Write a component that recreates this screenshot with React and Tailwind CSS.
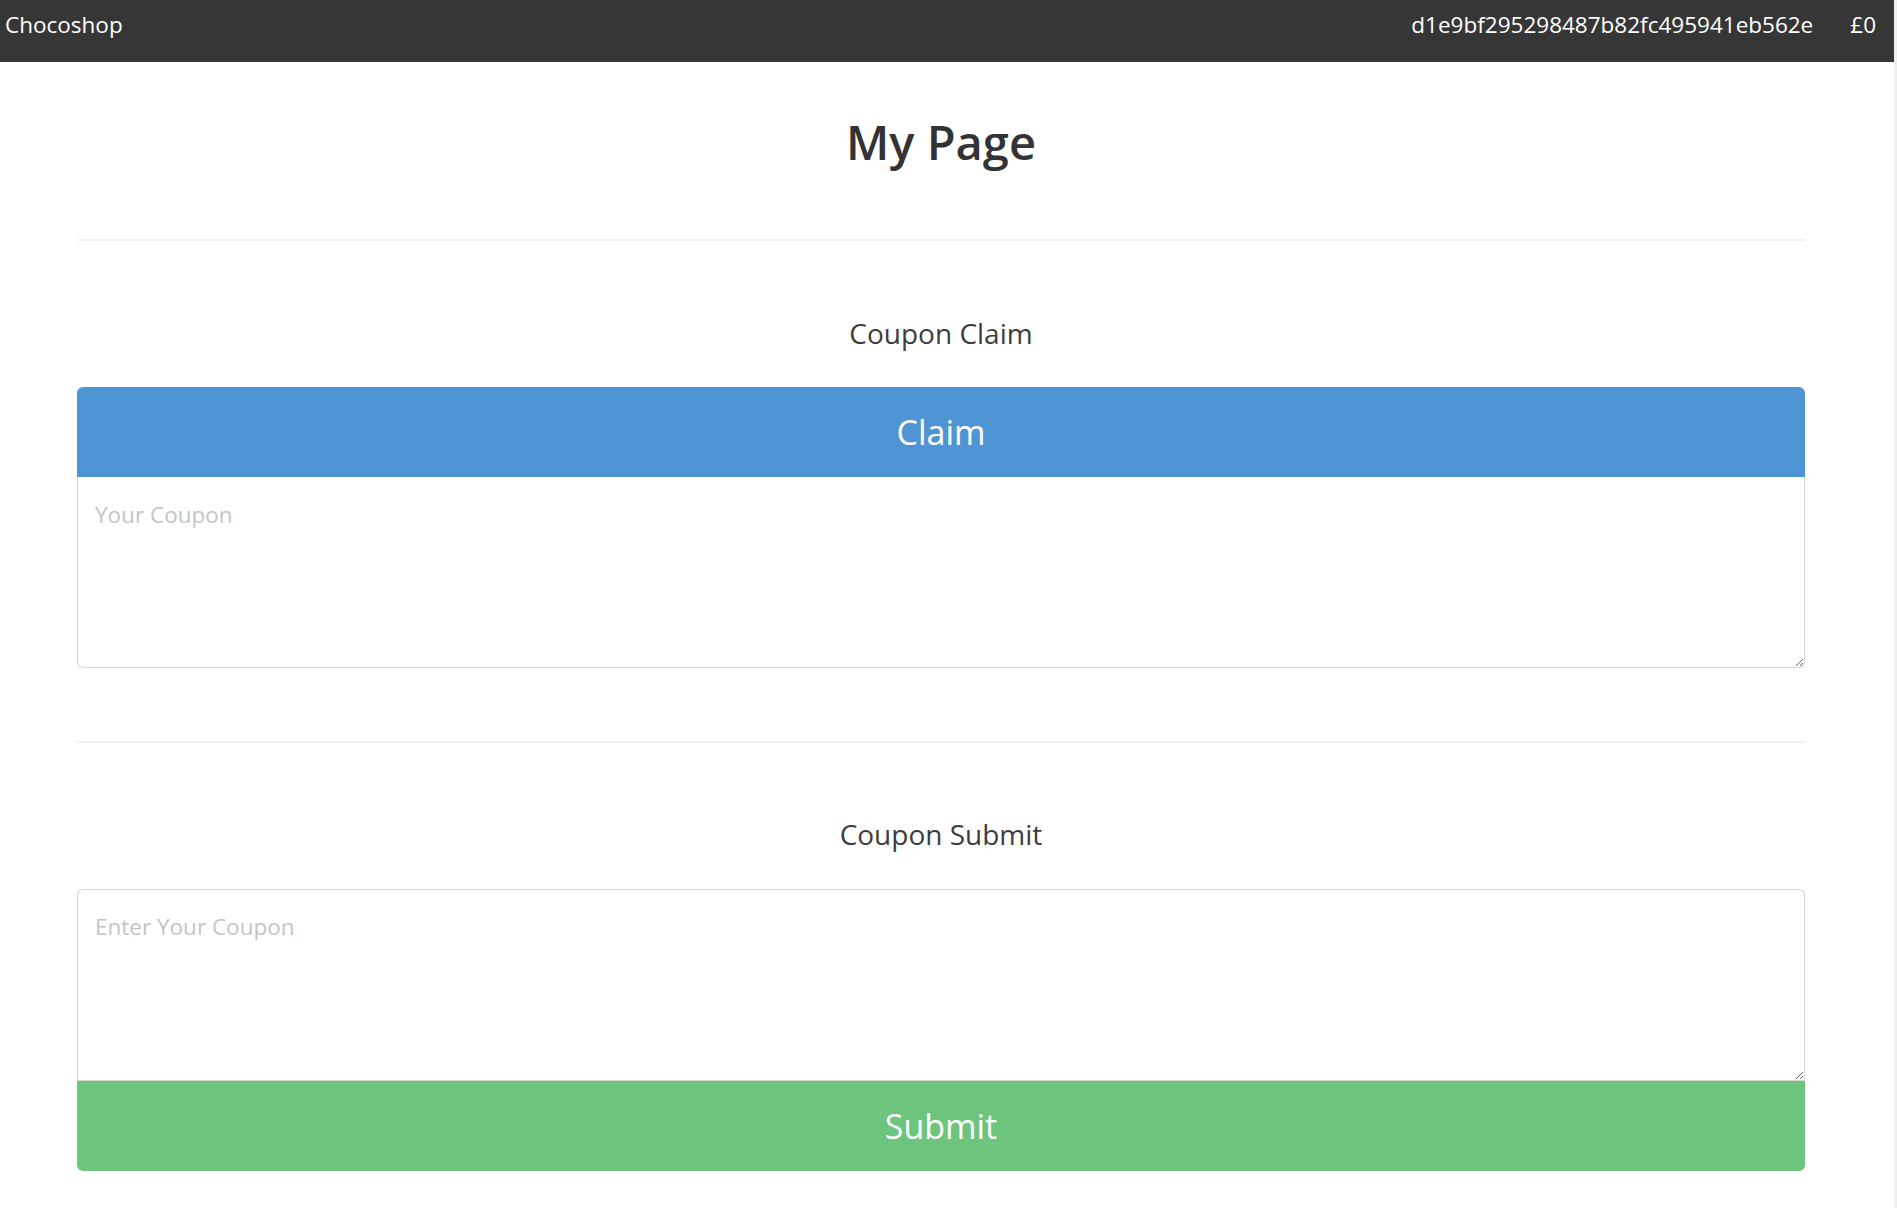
import { useState } from "react";

function Navbar() {
  return (
    <nav className="h-[62px] bg-[#363636] text-white flex items-center justify-between pl-[5px] pr-[18px] pb-[13px] text-[22.5px]">
      <span>Chocoshop</span>
      <div className="flex items-center gap-[37px]">
        <span>d1e9bf295298487b82fc495941eb562e</span>
        <span>£0</span>
      </div>
    </nav>
  );
}

function App() {
  const [claim, setClaim] = useState("");
  const [coupon, setCoupon] = useState("");

  return (
    <div
      className="flex min-h-[1208px] bg-white"
      style={{ fontFamily: '"Open Sans", "Noto Sans", sans-serif' }}
    >
      <div className="flex-1">
        <Navbar />

        <div className="ml-[77px] w-[1728px]">
          {/* Title */}
          <h1 className="mt-[50px] text-center text-[47px] leading-[60px] font-semibold text-[#333]">
            My Page
          </h1>
          <div className="mt-[67px] h-[2px] bg-[#f0f0f0]" />

          {/* Coupon claim */}
          <h3 className="mt-[72px] text-center text-[28px] leading-[40px] text-[#3d3d3d]">
            Coupon Claim
          </h3>
          <div className="mt-[34px] flex flex-col">
            <button className="h-[90px] rounded-t-[6px] bg-[#4f95d6] text-white text-[34px]">
              Claim
            </button>
            <textarea
              value={claim}
              onChange={(e) => setClaim(e.target.value)}
              placeholder="Your Coupon"
              className="h-[191px] rounded-b-[6px] border border-t-0 border-[#d6d6d6] px-[17px] pt-[21px] text-[22.5px] leading-[1.5] text-[#555] placeholder:text-[#c4c4c4] outline-none"
            />
          </div>

          <div className="mt-[73px] h-[2px] bg-[#f0f0f0]" />

          {/* Coupon submit */}
          <h3 className="mt-[71px] text-center text-[28px] leading-[40px] text-[#3d3d3d]">
            Coupon Submit
          </h3>
          <div className="mt-[35px] flex flex-col">
            <textarea
              value={coupon}
              onChange={(e) => setCoupon(e.target.value)}
              placeholder="Enter Your Coupon"
              className="h-[191px] rounded-t-[6px] border border-b-0 border-[#d6d6d6] px-[17px] pt-[20px] text-[22.5px] leading-[1.5] text-[#555] placeholder:text-[#c4c4c4] outline-none"
            />
            <button className="h-[91px] rounded-b-[6px] border-t border-[#d6d6d6] bg-[#6dc47d] text-white text-[34px]">
              Submit
            </button>
          </div>
        </div>
      </div>
      <div className="w-[3px] bg-[#efefef]" />
    </div>
  );
}

export default App;
